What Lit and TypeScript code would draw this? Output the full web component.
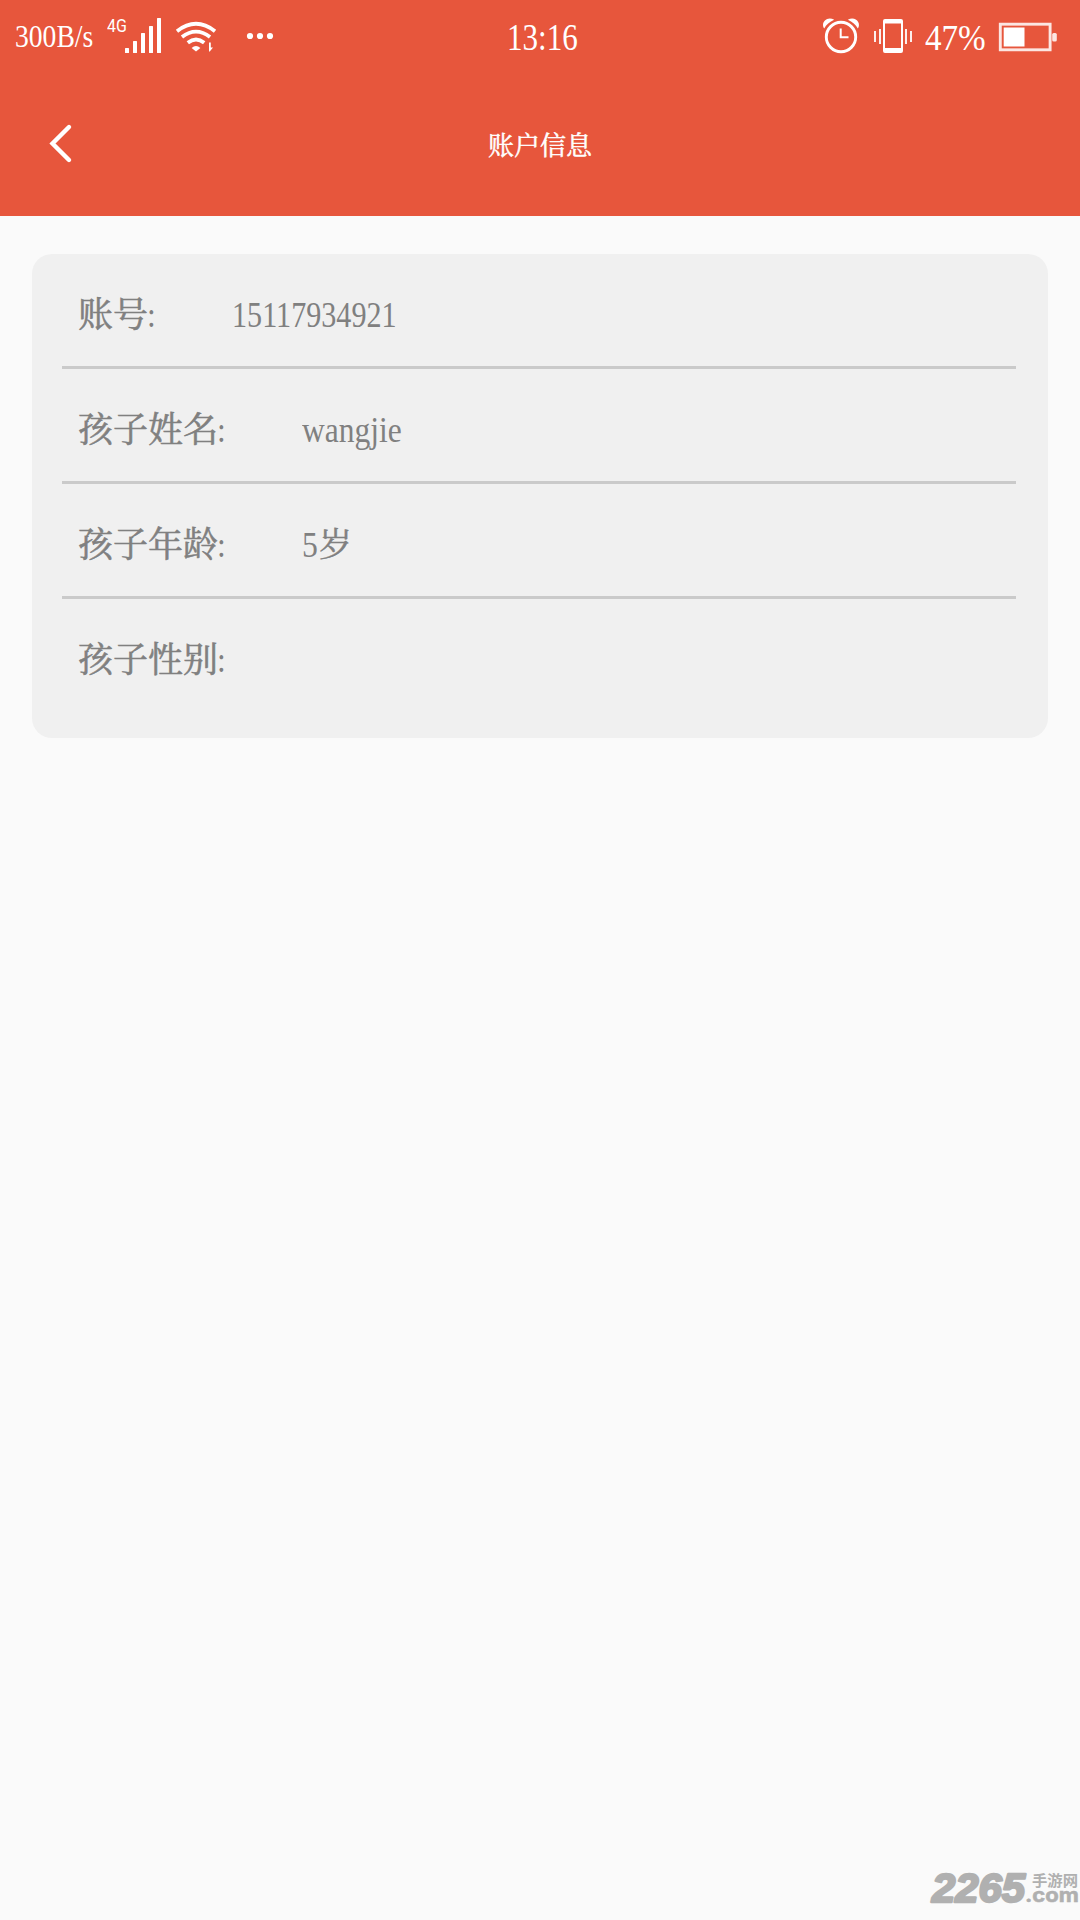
import { LitElement, html, svg, css } from "lit";
import { customElement } from "lit/decorators.js";

interface Field {
  label: string;
  value: string;
  suffix?: string;
  kind: string;
}

const fields: Field[] = [
  { label: "账号", value: "15117934921", kind: "digits" },
  { label: "孩子姓名", value: "wangjie", kind: "name" },
  { label: "孩子年龄", value: "5", suffix: "岁", kind: "age" },
  { label: "孩子性别", value: "", kind: "empty" },
];

@customElement("status-bar")
export class StatusBar extends LitElement {
  static styles = css`
    :host {
      display: grid;
      grid-template-columns: 1fr auto 1fr;
      align-items: start;
      height: 72px;
      color: #fff;
      font-family: "Liberation Serif", serif;
      white-space: nowrap;
    }
    .group { display: flex; align-items: flex-start; height: 72px; }
    .right { justify-content: flex-end; }
    svg { display: block; flex: none; }
    .text { display: block; transform-origin: 0 0; line-height: 40px; }
    .speed { width: 92px; padding-top: 17px; margin-left: 15px; font-size: 31px; transform: scaleX(0.89); }
    .clock { width: 66px; padding-top: 18px; font-size: 37px; transform: scaleX(0.84); }
    .percent { width: 61px; padding-top: 18px; font-size: 36px; transform: scaleX(0.92); }
    .network {
      font: 19px "Roboto", sans-serif;
      line-height: 20px;
      padding-top: 16px;
      width: 18px;
      transform: scaleX(0.84);
      transform-origin: 0 0;
    }
  `;

  render() {
    return html`
      <div class="group">
        <span class="text speed">300B/s</span>
        <span class="network">4G</span>
        <svg width="175" height="72" viewBox="125 0 175 72" fill="#fff">
          ${[48, 41, 33, 26, 18].map(
            (top, i) => svg`<rect x=${125 + i * 8} y=${top} width="4" height=${53 - top} rx=".5"></rect>`
          )}
          <g fill="none" stroke="#fff" stroke-width="3.8">
            <path d="M177 31.2Q196 16.4 215 31.2"></path>
            <path d="M182 37Q196 26.3 210 37"></path>
            <path d="M187.8 42.8Q196 36.3 204.2 42.8"></path>
          </g>
          <path d="M191.6 48Q196 44.2 200.4 48L196 51.5Z"></path>
          <path d="M209 42.5h1.8v5h2.2l-3.2 4h-.8z"></path>
          <circle cx="250" cy="36" r="3.1"></circle>
          <circle cx="260" cy="36" r="3.1"></circle>
          <circle cx="270" cy="36" r="3.1"></circle>
        </svg>
      </div>
      <span class="text clock">13:16</span>
      <div class="group right">
        <svg width="102" height="72" viewBox="823 0 102 72">
          <circle cx="841" cy="37" r="14.7" fill="none" stroke="#fff" stroke-width="2.9"></circle>
          <path d="M840.7 28.5V37.2H848.5" fill="none" stroke="#fff" stroke-width="2"></path>
          <path d="M824.2 28.6C820.3 23.5 826.5 15.5 834.2 19.8C829.5 21.7 826.3 24.8 824.2 28.6Z" fill="#fff"></path>
          <path d="M857.8 28.6C861.7 23.5 855.5 15.5 847.8 19.8C852.5 21.7 855.7 24.8 857.8 28.6Z" fill="#fff"></path>
          <path fill="#fff" fill-rule="evenodd" d="M885 19h16q2 0 2 2v30q0 2-2 2h-16q-2 0-2-2v-30q0-2 2-2zM885 23.5v24.5h16v-24.5z"></path>
          <path d="M875 31v11M880 29v15M906 29v15M911 31v11" fill="none" stroke="#fff" stroke-width="1.8"></path>
        </svg>
        <span class="text percent">47%</span>
        <svg width="94" height="72" viewBox="986 0 94 72" fill="#fff">
          <rect x="1000.3" y="24.2" width="49.8" height="25.6" fill="none" stroke="#fff" stroke-opacity=".85" stroke-width="2.9"></rect>
          <rect x="1003.7" y="27.5" width="20.8" height="19"></rect>
          <rect x="1052.2" y="33" width="4.6" height="8.5" rx="1.5" opacity=".85"></rect>
        </svg>
      </div>
    `;
  }
}

@customElement("brand-mark")
export class BrandMark extends LitElement {
  static styles = css`
    :host { display: block; }
    svg { display: block; fill: #b0b0b0; }
    .number { font: italic 700 41px "Liberation Sans", sans-serif; stroke: #b0b0b0; stroke-width: 2.4; stroke-linejoin: round; }
    .domain { font: 700 20px "Inter", sans-serif; stroke: #b0b0b0; stroke-width: 0.5; }
    .site { font: 700 15px "Noto Sans CJK SC", sans-serif; }
  `;

  render() {
    return html`
      <svg width="156" height="64" viewBox="924 1856 156 64">
        <text class="number" x="932" y="1901.5" textLength="93" lengthAdjust="spacingAndGlyphs">2265</text>
        <text class="domain" x="1025" y="1902" textLength="54" lengthAdjust="spacingAndGlyphs">.com</text>
        <text class="site" x="1032" y="1886" textLength="46" lengthAdjust="spacingAndGlyphs">手游网</text>
      </svg>
    `;
  }
}

@customElement("app-root")
export class AppRoot extends LitElement {
  static styles = css`
    :host {
      display: flex;
      flex-direction: column;
      width: 1080px;
      height: 1920px;
      overflow: hidden;
      background: #fafafa;
      font-family: "Liberation Serif", "Noto Serif CJK SC", "Noto Sans CJK SC", serif;
    }
    .header { height: 216px; background: #e7563c; color: #fff; }
    .nav {
      display: grid;
      grid-template-columns: 120px 1fr 120px;
      height: 144px;
    }
    .back { display: block; }
    .title {
      margin: 0;
      text-align: center;
      font-size: 26px;
      font-weight: 400;
      line-height: 149px;
      height: 144px;
      -webkit-text-stroke: 0.5px #fff;
    }
    .card {
      box-sizing: border-box;
      margin: 38px 32px 0;
      height: 484px;
      padding: 0 32px 0 30px;
      border-radius: 20px;
      background: #f0f0f0;
      color: #808080;
    }
    .row {
      box-sizing: border-box;
      display: flex;
      height: 115px;
      padding-left: 16px;
      border-bottom: 3px solid #cacaca;
      line-height: 122px;
      white-space: nowrap;
    }
    .row:last-child { border-bottom: 0; }
    .label { font-size: 35px; width: 224px; line-height: 123px; -webkit-text-stroke: 0.6px #808080; }
    .colon { display: inline-block; transform: translateX(-1px) scale(0.9, 1); transform-origin: 0 50%; -webkit-text-stroke: 0; }
    .short { width: 154px; }
    .value { font-size: 36px; transform-origin: 0 50%; }
    .digits { transform: scaleX(0.837); }
    .name { transform: scaleX(0.875); }
    .age { width: 17px; transform: scaleX(0.88); }
    .suffix { font-size: 33px; -webkit-text-stroke: 0.5px #808080; }
    .fill { flex: 1; }
    .footer { display: flex; justify-content: flex-end; }
  `;

  render() {
    return html`
      <header class="header">
        <status-bar></status-bar>
        <div class="nav">
          <svg class="back" width="120" height="144" viewBox="0 72 120 144" role="button">
            <path d="M69 127L52.5 143.5L69 160" fill="none" stroke="#fff" stroke-width="4.4" stroke-linecap="round"></path>
          </svg>
          <h1 class="title">账户信息</h1>
        </div>
      </header>
      <main class="card">
        ${fields.map(
          (f) => html`
            <div class="row">
              <span class="label ${f.kind === "digits" ? "short" : ""}">${f.label}<span class="colon">:</span></span>
              <span class="value ${f.kind}">${f.value}</span>
              ${f.suffix ? html`<span class="suffix">${f.suffix}</span>` : ""}
            </div>
          `
        )}
      </main>
      <div class="fill"></div>
      <footer class="footer"><brand-mark></brand-mark></footer>
    `;
  }
}
